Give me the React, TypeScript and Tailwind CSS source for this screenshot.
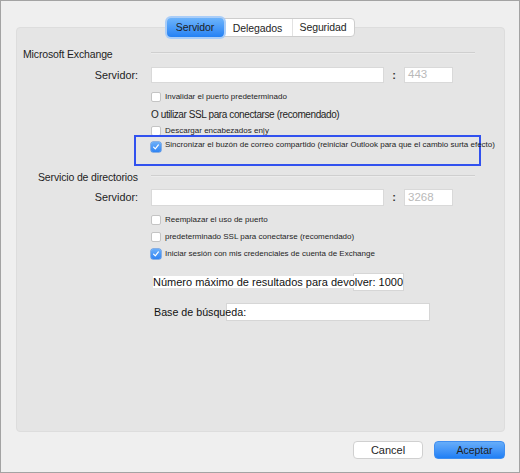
import type { ReactNode } from 'react'

const font = { fontFamily: '"Liberation Sans", Arial, sans-serif' }

function Check({ checked = false }: { checked?: boolean }) {
  if (checked) {
    return (
      <span className="flex h-[10px] w-[10px] shrink-0 items-center justify-center rounded-[2px] bg-gradient-to-b from-[#6aaef9] to-[#2f84f3] shadow-[0_0_0_0.5px_#2f7be0]">
        <svg width="8" height="8" viewBox="0 0 8 8" fill="none">
          <path d="M1.6 4.2 L3.3 5.9 L6.4 1.9" stroke="white" strokeWidth="1.2" strokeLinecap="round" strokeLinejoin="round" />
        </svg>
      </span>
    )
  }
  return <span className="h-[10px] w-[10px] shrink-0 rounded-[2px] border border-[#c4c4c4] bg-white" />
}

function CheckRow({ checked, children, className = '' }: { checked?: boolean; children: ReactNode; className?: string }) {
  return (
    <div className={`flex h-[10px] items-center gap-[4px] ${className}`}>
      <Check checked={checked} />
      <span className="whitespace-nowrap text-[8px] leading-[10px] text-[#1e1e1e]">{children}</span>
    </div>
  )
}

function SectionHeader({ title, indent }: { title: string; indent: string }) {
  return (
    <div className="flex h-[14px] items-start">
      <div className={`w-[134px] shrink-0 text-[10.5px] leading-[14px] tracking-[-0.15px] text-[#1e1e1e] ${indent}`}>{title}</div>
      <div className="mt-[5px] h-[2px] w-[324px] border-t border-[#cfcfcf] border-b border-b-[#ececec]" />
    </div>
  )
}

function ServerRow({ port, h }: { port: string; h: string }) {
  return (
    <div className={`flex items-center ${h}`}>
      <div className="w-[121px] shrink-0 text-right text-[10.8px] text-[#1e1e1e]">Servidor:</div>
      <div className={`ml-[13px] w-[233px] border border-[#d9d9d9] bg-white ${h}`} />
      <div className="w-[20px] text-center text-[11px] font-bold text-[#333]">:</div>
      <div className={`flex w-[49px] items-center border border-[#d9d9d9] bg-white pl-[3px] text-[11.5px] text-[#b9b9b9] ${h}`}>{port}</div>
    </div>
  )
}

export default function App() {
  return (
    <div style={font} className="flex h-[473px] w-[520px] flex-col border border-[#a3a3a3] bg-[#efefef] pl-[15px] pr-[14px] pt-[17px]">
      {/* tabs */}
      <div className="relative z-10 flex h-[19px] justify-center">
        <div className="flex h-[19px] items-stretch rounded-[4px] border border-[#cdcdcd] bg-white text-[10.5px] tracking-[-0.1px] text-[#1e1e1e]">
          <div className="-my-px -ml-px flex w-[57px] items-center justify-center rounded-[4px] bg-gradient-to-b from-[#6db4fb] to-[#2381f4] shadow-[0_0_0_2px_#a9cdf8]">
            Servidor
          </div>
          <div className="flex w-[69px] items-center justify-center border-r border-[#e2e2e2] pt-[2px]">Delegados</div>
          <div className="flex w-[61px] items-center justify-center">Seguridad</div>
        </div>
      </div>

      {/* panel */}
      <div className="-mt-[10px] flex h-[405px] flex-col rounded-[4px] border border-[#dddddd] bg-[#e5e5e5]">
        <div className="mt-[19px]">
          <SectionHeader title="Microsoft Exchange" indent="pl-[6px]" />
        </div>
        <div className="mt-[6px]">
          <ServerRow port="443" h="h-[16px]" />
        </div>
        <CheckRow className="ml-[134px] mt-[9px]">Invalidar el puerto predeterminado</CheckRow>
        <div className="ml-[134px] mt-[6px] h-[13px] text-[10px] leading-[13px] tracking-[-0.4px] text-[#1e1e1e]">O utilizar SSL para conectarse (recomendado)</div>
        <CheckRow className="ml-[134px] mt-[5px]">Descargar encabezados en|y</CheckRow>
        <div className="ml-[117px] mt-[-1px] h-[31px] w-[347px] border-2 border-[#3151ef] pl-[15px] pt-[5px]">
          <div className="flex items-start gap-[4px]">
            <Check checked />
            <span className="-mt-[2px] whitespace-nowrap text-[8px] leading-[10px] text-[#1e1e1e]">
              Sincronizar el buzón de correo compartido (reiniciar Outlook para que el cambio surta efecto)
            </span>
          </div>
        </div>
        <div className="mt-[4px]">
          <SectionHeader title="Servicio de directorios" indent="pl-[21px]" />
        </div>
        <div className="mt-[5px]">
          <ServerRow port="3268" h="h-[17px]" />
        </div>
        <CheckRow className="ml-[134px] mt-[9px]">Reemplazar el uso de puerto</CheckRow>
        <CheckRow className="ml-[134px] mt-[7px]">predeterminado SSL para conectarse (recomendado)</CheckRow>
        <CheckRow checked className="ml-[134px] mt-[7px]">Iniciar sesión con mis credenciales de cuenta de Exchange</CheckRow>

        <div className="ml-[136px] mt-[14px] flex h-[18px] items-center text-[11px] text-[#111]">
          <span className="relative z-10 h-[12px] whitespace-nowrap bg-white leading-[12px]">Número máximo de resultados para devolver:</span>
          <span className="relative z-10 whitespace-nowrap">&nbsp;1000</span>
          <div className="-ml-[50px] h-[18px] w-[51px] shrink-0 border border-[#d6d6d6] bg-white" />
        </div>
        <div className="ml-[137px] mt-[12px] flex h-[18px] items-center text-[10.7px] text-[#111]">
          <span className="relative z-10 whitespace-nowrap">Base de búsqueda:</span>
          <div className="-ml-[20px] h-[18px] w-[204px] shrink-0 border border-[#d6d6d6] bg-white" />
        </div>
      </div>

      {/* buttons */}
      <div className="mt-[9px] flex justify-end gap-[11px]">
        <button className="h-[18px] w-[70px] rounded-[4px] border border-[#d0d0d0] bg-white text-[11px] leading-[16px] text-[#1e1e1e]">Cancel</button>
        <button className="h-[18px] w-[71px] rounded-[4px] border border-[#3f8ef0] bg-gradient-to-b from-[#66adf9] to-[#1e7ff5] pl-[10px] text-[10.5px] leading-[16px] text-[#1e1e1e]">Aceptar</button>
      </div>
    </div>
  )
}
